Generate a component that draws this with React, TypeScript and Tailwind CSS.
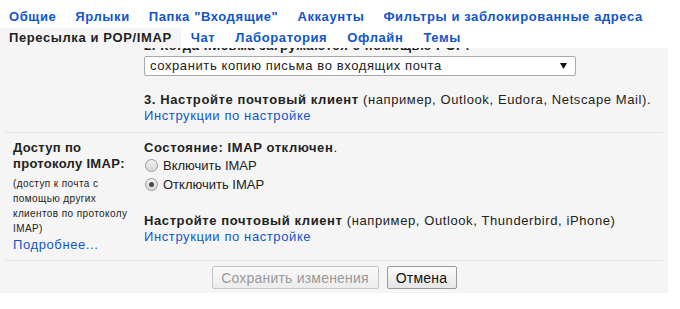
const tabsTop = ["Общие", "Ярлыки", 'Папка "Входящие"', "Аккаунты", "Фильтры и заблокированные адреса"]
const tabsBottom = ["Пересылка и POP/IMAP", "Чат", "Лаборатория", "Офлайн", "Темы"]

function Radio({ checked, label }: { checked?: boolean; label: string }) {
  return (
    <div className="flex items-center h-[19px] tracking-normal">
      <span className="ml-[1px] w-[13px] h-[13px] rounded-full border border-[#9a9a9a] bg-gradient-to-b from-[#f2f2f2] to-[#d8d8d8] flex items-center justify-center">
        {checked && <span className="w-[5px] h-[5px] rounded-full bg-[#4a4a4a]" />}
      </span>
      <span className="ml-[5px]">{label}</span>
    </div>
  )
}

export default function App() {
  return (
    <div className="w-[680px] h-[309px] bg-white text-[13px] leading-[16px] text-[#222] font-['Liberation_Sans',Arial,sans-serif] overflow-hidden">
      {/* tabs */}
      <div className="flex mt-[6px] h-[22px] items-center font-bold text-[#15c] tracking-[0.6px]">
        {tabsTop.map((t) => (
          <span key={t} className="pl-[9px] pr-[10px] whitespace-nowrap">{t}</span>
        ))}
      </div>
      <div className="flex h-[20px] font-bold text-[#15c] tracking-[0.6px]">
        {tabsBottom.map((t, i) => (
          <span
            key={t}
            className={i == 0 ? "pl-[9px] pr-[9px] flex items-center bg-[#f5f5f5] text-[#222] whitespace-nowrap" : "pl-[10px] pr-[10px] flex items-center whitespace-nowrap"}
          >
            {t}
          </span>
        ))}
      </div>

      <div className="w-[668px] h-[245px] bg-[#f5f5f5] overflow-hidden tracking-[0.6px]">
        <div className="-mt-[10px]">
          {/* POP section (scrolled) */}
          <div className="flex pb-[8px]">
            <div className="w-[144px] shrink-0" />
            <div>
              <div className="font-bold">2. Когда письма загружаются с помощью POP:</div>
              <div className="mt-[2px] w-[432px] h-[20px] bg-white border border-[#a9a9a9] rounded-[2px] flex items-center justify-between pl-[5px] pr-[8px]">
                <span>сохранить копию письма во входящих почта</span>
                <svg width="7" height="6" viewBox="0 0 7 6">
                  <path d="M0 0 L7 0 L3.5 6 Z" fill="#111" />
                </svg>
              </div>
              <div className="mt-[16px]">
                <b>3. Настройте почтовый клиент</b> (например, Outlook, Eudora, Netscape Mail).
              </div>
              <div className="text-[#15c]">Инструкции по настройке</div>
            </div>
          </div>
          <div className="mx-[5px] border-t border-[#e2e2e2]" />

          {/* IMAP section */}
          <div className="flex pt-[7px] pb-[7px]">
            <div className="w-[144px] shrink-0 pl-[13px]">
              <div className="font-bold tracking-[0.3px]">
                Доступ по<br />протоколу IMAP:
              </div>
              <div className="mt-[4px] text-[10px] leading-[15px] tracking-[0.4px]">
                (доступ к почта с<br />помощью других<br />клиентов по протоколу<br />IMAP)
              </div>
              <div className="mt-[1px] text-[#15c]">Подробнее...</div>
            </div>
            <div>
              <div>
                <b>Состояние: IMAP отключен</b>.
              </div>
              <Radio label="Включить IMAP" />
              <Radio checked label="Отключить IMAP" />
              <div className="mt-[19px]">
                <b>Настройте почтовый клиент</b> (например, Outlook, Thunderbird, iPhone)
              </div>
              <div className="text-[#15c]">Инструкции по настройке</div>
            </div>
          </div>
          <div className="mx-[5px] border-t border-[#e2e2e2]" />

          {/* buttons */}
          <div className="flex justify-center gap-[8px] mt-[5px] tracking-[0.2px]">
            <button className="h-[23px] w-[167px] border border-[#c4c4c4] rounded-[2px] bg-gradient-to-b from-[#fafafa] to-[#ececec] text-[#9a9a9a] text-[14px]">
              Сохранить изменения
            </button>
            <button className="h-[23px] w-[70px] border border-[#9a9a9a] rounded-[2px] bg-gradient-to-b from-[#fafafa] to-[#e6e6e6] text-[#111] text-[14px]">
              Отмена
            </button>
          </div>
        </div>
      </div>
    </div>
  )
}
